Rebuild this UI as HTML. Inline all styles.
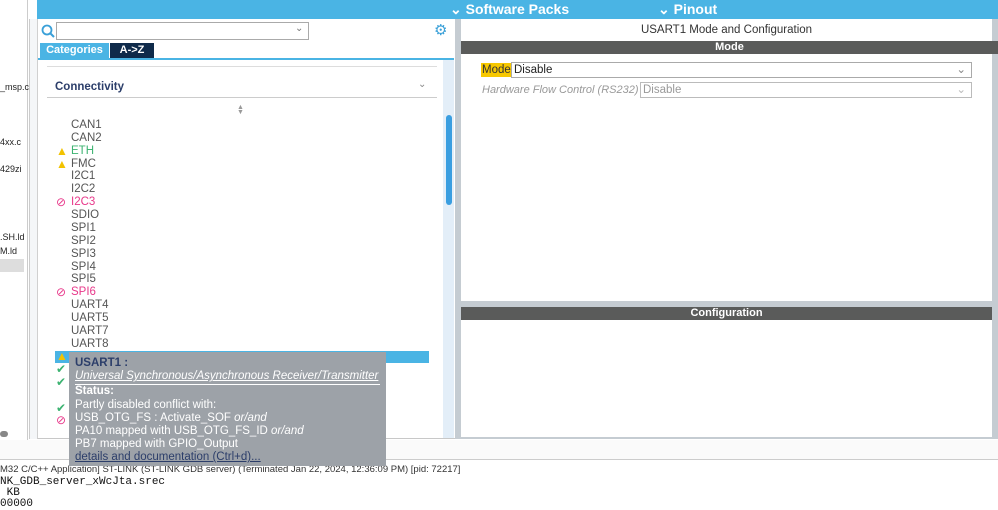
<!DOCTYPE html>
<html><head><style>
*{margin:0;padding:0;box-sizing:border-box}
body{width:998px;height:504px;overflow:hidden;background:#fff;font-family:"Liberation Sans",sans-serif;position:relative}
.a{position:absolute}
.li{position:absolute;left:71px;font-size:11.5px;color:#555;line-height:13px}
.ic{position:absolute;left:56px;font-size:12px;line-height:13px}
</style></head><body>
<div class="a" style="left:0;top:0;width:28px;height:440px;background:#fff;border-right:1px solid #ccc"></div>
<div class="a" style="left:0;top:82px;font-size:9px;color:#222">_msp.c</div>
<div class="a" style="left:0;top:137px;font-size:9px;color:#222">4xx.c</div>
<div class="a" style="left:0;top:164px;font-size:9px;color:#222">429zi</div>
<div class="a" style="left:0;top:232px;font-size:9px;color:#222">.SH.ld</div>
<div class="a" style="left:0;top:246px;font-size:9px;color:#222">M.ld</div>
<div class="a" style="left:0;top:259px;width:24px;height:13px;background:#ddd"></div>
<div class="a" style="left:0;top:431px;width:8px;height:6px;background:#888;border-radius:3px"></div>
<div class="a" style="left:37px;top:0;width:961px;height:19px;background:#4ab4e4"></div>
<div class="a" style="left:450px;top:0;color:#fff;font-size:14px;font-weight:bold;line-height:18px">⌄ Software Packs</div>
<div class="a" style="left:658px;top:0;color:#fff;font-size:14px;font-weight:bold;line-height:18px">⌄ Pinout</div>
<div class="a" style="left:29px;top:19px;width:429px;height:420px;background:#f4f6f8;border-left:1px solid #ccc"></div>
<div class="a" style="left:37px;top:19px;width:421px;height:420px;background:#fff;border-left:1px solid #d0d0d0;border-bottom:1px solid #c8c8c8"></div>
<svg class="a" style="left:41px;top:24px" width="14" height="14"><circle cx="6" cy="6" r="4.5" stroke="#3aa0d8" stroke-width="1.8" fill="none"/><line x1="9" y1="9" x2="13" y2="13" stroke="#3aa0d8" stroke-width="2"/></svg>
<div class="a" style="left:56px;top:22px;width:253px;height:18px;border:1px solid #aaa;background:#fff"></div>
<div class="a" style="left:295px;top:23px;font-size:10px;color:#777">⌄</div>
<div class="a" style="left:434px;top:21px;font-size:15px;color:#3aa0d8">⚙</div>
<div class="a" style="left:40px;top:43px;width:69px;height:15px;background:#4ab4e4;color:#fff;font-size:11px;text-align:center;line-height:15px;font-weight:bold">Categories</div>
<div class="a" style="left:110px;top:43px;width:44px;height:15px;background:#0f2a4a;color:#fff;font-size:11px;text-align:center;line-height:15px;font-weight:bold">A-&gt;Z</div>
<div class="a" style="left:38px;top:58px;width:416px;height:2px;background:#4ab4e4"></div>
<div class="a" style="left:47px;top:66px;width:390px;height:1px;background:#ddd"></div>
<div class="a" style="left:55px;top:81px;font-size:11.5px;color:#2c3e6a;font-weight:bold">Connectivity</div>
<div class="a" style="left:418px;top:79px;font-size:10px;color:#888">⌄</div>
<div class="a" style="left:47px;top:97px;width:390px;height:1px;background:#ccc"></div>
<div class="a" style="left:237px;top:105px;font-size:7px;color:#999;line-height:5px">▲<br>▼</div>
<div class="a" style="left:443px;top:60px;width:11px;height:378px;background:#e3eef8"></div>
<div class="a" style="left:446px;top:115px;width:6px;height:90px;background:#3a9ee0;border-radius:3px"></div>
<div class="li" style="top:119px">CAN1</div>
<div class="li" style="top:132px">CAN2</div>
<div class="ic" style="top:145px;color:#f2c200">▲</div><div class="li" style="top:145px;color:#3cb371">ETH</div>
<div class="ic" style="top:158px;color:#f2c200">▲</div><div class="li" style="top:158px">FMC</div>
<div class="li" style="top:170px">I2C1</div>
<div class="li" style="top:183px">I2C2</div>
<div class="ic" style="top:196px;color:#e8388a">⊘</div><div class="li" style="top:196px;color:#e8388a">I2C3</div>
<div class="li" style="top:209px">SDIO</div>
<div class="li" style="top:222px">SPI1</div>
<div class="li" style="top:235px">SPI2</div>
<div class="li" style="top:248px">SPI3</div>
<div class="li" style="top:261px">SPI4</div>
<div class="li" style="top:273px">SPI5</div>
<div class="ic" style="top:286px;color:#e8388a">⊘</div><div class="li" style="top:286px;color:#e8388a">SPI6</div>
<div class="li" style="top:299px">UART4</div>
<div class="li" style="top:312px">UART5</div>
<div class="li" style="top:325px">UART7</div>
<div class="li" style="top:338px">UART8</div>
<div class="a" style="left:55px;top:351px;width:374px;height:12px;background:#4ab4e4"></div>
<div class="ic" style="top:350px;color:#f2c200">▲</div>
<div class="ic" style="top:363px;color:#3cb371">✔</div>
<div class="ic" style="top:376px;color:#3cb371">✔</div>
<div class="ic" style="top:402px;color:#3cb371">✔</div>
<div class="ic" style="top:414px;color:#e8388a">⊘</div>
<div class="a" style="left:455px;top:19px;width:6px;height:420px;background:#c5ccd2"></div>
<div class="a" style="left:992px;top:19px;width:6px;height:420px;background:#c5ccd2"></div>
<div class="a" style="left:461px;top:24px;width:531px;text-align:center;font-size:11.5px;color:#333">USART1 Mode and Configuration</div>
<div class="a" style="left:461px;top:41px;width:537px;height:13px;background:#5a5b5a;color:#fff;font-size:11px;font-weight:bold;text-align:center;line-height:13px">Mode</div>
<div class="a" style="left:481px;top:63px;height:14px;background:#f7c800;font-size:11.5px;line-height:14px;color:#333;padding:0 1px">Mode</div>
<div class="a" style="left:511px;top:62px;width:461px;height:16px;border:1px solid #aaa;font-size:11.5px;line-height:14px;padding-left:2px;color:#222">Disable<span style="position:absolute;right:5px;color:#888">⌄</span></div>
<div class="a" style="left:482px;top:84px;font-size:11px;font-style:italic;color:#999;white-space:nowrap">Hardware Flow Control (RS232)</div>
<div class="a" style="left:640px;top:82px;width:332px;height:16px;border:1px solid #bbb;font-size:11.5px;line-height:14px;padding-left:2px;color:#999;background:#fff">Disable<span style="position:absolute;right:5px;color:#bbb">⌄</span></div>
<div class="a" style="left:461px;top:301px;width:531px;height:6px;background:#c5ccd2"></div>
<div class="a" style="left:461px;top:307px;width:531px;height:13px;background:#5a5b5a;color:#fff;font-size:11px;font-weight:bold;text-align:center;line-height:13px">Configuration</div>
<div class="a" style="left:461px;top:437px;width:537px;height:2px;background:#c5ccd2"></div>
<div class="a" style="left:0;top:440px;width:998px;height:20px;background:#fafafa;border-bottom:1px solid #ccc"></div>
<div class="a" style="left:0;top:464px;font-size:9.5px;color:#333;white-space:nowrap">M32 C/C++ Application] ST-LINK (ST-LINK GDB server) (Terminated Jan 22, 2024, 12:36:09 PM) [pid: 72217]</div>
<div class="a" style="left:0;top:477px;font-family:'Liberation Mono',monospace;font-size:11px;line-height:11px;color:#111;white-space:pre">NK_GDB_server_xWcJta.srec
 KB
00000</div>
<div class="a" style="z-index:10;left:69px;top:352px;width:317px;height:114px;background:#9da2a8;padding:5px 6px;font-size:11.5px;line-height:13.2px;color:#fff;white-space:nowrap">
<div style="color:#2c3e6a;font-weight:bold">USART1 :</div>
<div style="font-style:italic;text-decoration:underline;color:#fff;border-bottom:1px solid #fff;padding-bottom:1px">Universal Synchronous/Asynchronous Receiver/Transmitter</div>
<div style="font-weight:bold">Status:</div>
<div>Partly disabled conflict with:</div>
<div>USB_OTG_FS : Activate_SOF <i>or/and</i></div>
<div>PA10 mapped with USB_OTG_FS_ID <i>or/and</i></div>
<div>PB7 mapped with GPIO_Output</div>
<div style="color:#2c3e6a;text-decoration:underline">details and documentation (Ctrl+d)...</div>
</div>
</body></html>
